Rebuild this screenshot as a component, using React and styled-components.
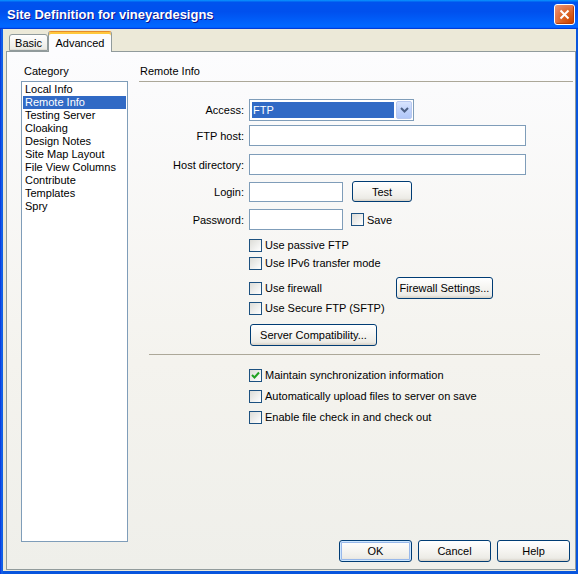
import React from 'react';
import styled, { createGlobalStyle } from 'styled-components';

const GlobalStyle = createGlobalStyle`
	html, body {
		margin: 0;
		padding: 0;
	}
	body {
		font-family: "Liberation Sans", Arial, sans-serif;
		font-size: 11px;
		color: #000;
	}
`;

const Window = styled.div`
	width: 578px;
	height: 574px;
	box-sizing: border-box;
	background: linear-gradient(90deg, #0831d9 0, #166aee 2px, #0855dd 3px);
	display: flex;
	flex-direction: column;
`;

const TitleBar = styled.div`
	height: 29px;
	flex: none;
	display: flex;
	align-items: center;
	justify-content: space-between;
	padding: 0 3px 0 7px;
	background: linear-gradient(180deg, #0997ff, #0053ee 8%, #0050ee 40%, #06f 88%, #06f 93%, #005bff 95%, #003dd7 96%, #003dd7);
`;

const Title = styled.span`
	font-family: "Liberation Sans", Arial, sans-serif;
	font-weight: bold;
	font-size: 13px;
	color: #fff;
	text-shadow: 1px 1px #0f1089;
`;

const CloseButton = styled.button`
	width: 21px;
	height: 21px;
	padding: 0;
	border: 1px solid #fff;
	border-radius: 3px;
	background: radial-gradient(circle at 85% 90%, #cc4600 0, #dc6527 45%, #e5805a 75%, #eb9b7c 100%);
	display: flex;
	align-items: center;
	justify-content: center;
	box-shadow: inset -1px -1px 1px #b33b07;
`;

const Body = styled.div`
	flex: 1;
	display: flex;
	flex-direction: column;
	background: #ece9d8;
	margin: 0 2px 3px 3px;
	padding: 2px 0 1px 3px;
`;

const TabStrip = styled.div`
	height: 20px;
	display: flex;
	align-items: flex-end;
	padding-left: 3px;
`;

const Tab = styled.div`
	box-sizing: border-box;
	width: ${props => props.w}px;
	height: ${props => (props.active ? 21 : 17)}px;
	margin-bottom: ${props => (props.active ? -1 : 0)}px;
	position: relative;
	z-index: ${props => (props.active ? 2 : 0)};
	display: flex;
	align-items: center;
	justify-content: center;
	padding-top: ${props => (props.active ? 1 : 0)}px;
	border: 1px solid #919b9c;
	border-bottom: ${props => (props.active ? 'none' : '1px solid #919b9c')};
	border-top: ${props => (props.active ? '1px solid #e68b2c' : '1px solid #919b9c')};
	border-radius: 3px 3px 0 0;
	background: ${props => (props.active ? '#fcfcfe' : 'linear-gradient(180deg, #fff, #ecebe5 90%, #dad8cf)')};
	box-shadow: ${props => (props.active ? 'inset 0 2px #ffc83c' : 'none')};
	font-size: 11px;
`;

const Panel = styled.div`
	flex: 1;
	display: flex;
	border: 1px solid #919b9c;
	background: linear-gradient(180deg, #fcfcfe, #f4f3ee 60%, #efefea);
	padding: 12px 2px 0 14px;
`;

const Sidebar = styled.div`
	width: 107px;
	flex: none;
	display: flex;
	flex-direction: column;
`;

const SectionLabel = styled.div`
	height: 13px;
	line-height: 13px;
	margin-top: 1px;
	padding-left: ${props => props.indent || 0}px;
	margin-bottom: 3px;
`;

const ListBox = styled.div`
	box-sizing: border-box;
	height: 461px;
	border: 1px solid #7f9db9;
	background: #fff;
	padding: 1px;
`;

const ListItem = styled.div`
	height: 13px;
	line-height: 13px;
	padding-left: 2px;
	background: ${props => (props.selected ? '#316ac5' : 'transparent')};
	color: ${props => (props.selected ? '#fff' : '#000')};
	white-space: nowrap;
`;

const Main = styled.div`
	flex: 1;
	display: flex;
	flex-direction: column;
	margin-left: 11px;
`;

const Heading = styled.div`
	margin-top: 1px;
	height: 13px;
	line-height: 13px;
	padding: 0 0 3px 1px;
	border-bottom: 1px solid #aca899;
`;

const Row = styled.div`
	display: flex;
	align-items: center;
	height: ${props => props.h}px;
	margin-top: ${props => props.mt}px;
	padding-left: ${props => props.pl || 0}px;
`;

const Label = styled.label`
	width: 105px;
	margin-right: 5px;
	text-align: right;
	white-space: nowrap;
`;

const TextInput = styled.div`
	box-sizing: border-box;
	width: ${props => props.w}px;
	height: ${props => props.h || 21}px;
	border: 1px solid #7f9db9;
	background: #fff;
`;

const Select = styled.div`
	box-sizing: border-box;
	width: 165px;
	height: 22px;
	border: 1px solid #7f9db9;
	background: #fff;
	padding: 1px;
	display: flex;
`;

const SelectValue = styled.div`
	flex: 1;
	margin: 1px 0 1px 1px;
	background: #316ac5;
	color: #fff;
	line-height: 16px;
	padding-left: 1px;
`;

const DropButton = styled.div`
	box-sizing: border-box;
	width: 16px;
	margin-left: 2px;
	border: 1px solid #b9c9ef;
	border-radius: 2px;
	background: linear-gradient(180deg, #d8e4fd, #c1d3fb 50%, #b1c7f9);
	display: flex;
	align-items: center;
	justify-content: center;
`;

const Button = styled.button`
	box-sizing: border-box;
	width: ${props => props.w}px;
	height: ${props => props.h || 22}px;
	margin-left: ${props => props.ml || 0}px;
	padding: 0;
	font-family: "Liberation Sans", Arial, sans-serif;
	font-size: 11px;
	color: #000;
	border: 1px solid #003c74;
	border-radius: 3px;
	background: linear-gradient(180deg, #fff, #f3f2ee 60%, #ecebe6 86%, #d6d0c5);
	box-shadow: ${props => (props.primary ? 'inset 0 0 0 1px #cee7ff, inset 0 0 0 2px #98b8ea' : 'none')};
	flex: none;
`;

const CheckItem = styled.label`
	display: flex;
	align-items: center;
	width: ${props => (props.w ? `${props.w}px` : 'auto')};
	margin-left: ${props => props.ml || 0}px;
	white-space: nowrap;
`;

const Box = styled.span`
	box-sizing: border-box;
	width: 13px;
	height: 13px;
	margin-right: 3px;
	border: 1px solid #1c5180;
	background: linear-gradient(135deg, #dcdcd7, #fff);
	display: flex;
	align-items: center;
	justify-content: center;
	flex: none;
`;

const Separator = styled.div`
	margin: 8px 0 0 10px;
	width: 391px;
	height: 1px;
	background: #aca899;
`;

const Footer = styled.div`
	margin-top: auto;
	display: flex;
	justify-content: flex-end;
	gap: 6px;
	padding: 0 3px 7px 0;
`;

const Check = ({ label, checked, w, ml }) => (
	<CheckItem w={w} ml={ml}>
		<Box>
			{checked && (
				<svg width="9" height="9" viewBox="0 0 9 9">
					<path d="M1 4 L3.5 6.5 L8 1.5" fill="none" stroke="#21a121" strokeWidth="2" />
				</svg>
			)}
		</Box>
		{label}
	</CheckItem>
);

const categories = [
	'Local Info',
	'Remote Info',
	'Testing Server',
	'Cloaking',
	'Design Notes',
	'Site Map Layout',
	'File View Columns',
	'Contribute',
	'Templates',
	'Spry',
];

const App = () => (
	<>
		<GlobalStyle />
		<Window>
			<TitleBar>
				<Title>Site Definition for vineyardesigns</Title>
				<CloseButton aria-label="Close">
					<svg width="11" height="11" viewBox="0 0 11 11">
						<path d="M1.5 1.5 L9.5 9.5 M9.5 1.5 L1.5 9.5" stroke="#fff" strokeWidth="2" />
					</svg>
				</CloseButton>
			</TitleBar>
			<Body>
				<TabStrip>
					<Tab w={39}>Basic</Tab>
					<Tab w={64} active>Advanced</Tab>
				</TabStrip>
				<Panel>
					<Sidebar>
						<SectionLabel indent={3}>Category</SectionLabel>
						<ListBox>
							{categories.map(c => (
								<ListItem key={c} selected={c === 'Remote Info'}>
									{c}
								</ListItem>
							))}
						</ListBox>
					</Sidebar>
					<Main>
						<Heading>Remote Info</Heading>
						<Row h={22} mt={17}>
							<Label>Access:</Label>
							<Select>
								<SelectValue>FTP</SelectValue>
								<DropButton>
									<svg width="9" height="6" viewBox="0 0 9 6">
										<path d="M1 1 L4.5 4.5 L8 1" fill="none" stroke="#4d6185" strokeWidth="2" />
									</svg>
								</DropButton>
							</Select>
						</Row>
						<Row h={21} mt={4}>
							<Label>FTP host:</Label>
							<TextInput w={277} />
						</Row>
						<Row h={21} mt={8}>
							<Label>Host directory:</Label>
							<TextInput w={277} />
						</Row>
						<Row h={21} mt={6}>
							<Label>Login:</Label>
							<TextInput w={94} h={20} />
							<Button w={60} h={21} ml={9}>Test</Button>
						</Row>
						<Row h={21} mt={7}>
							<Label>Password:</Label>
							<TextInput w={94} />
							<Check label="Save" ml={8} />
						</Row>
						<Row h={16} mt={7} pl={110}>
							<Check label="Use passive FTP" />
						</Row>
						<Row h={16} mt={2} pl={110}>
							<Check label="Use IPv6 transfer mode" />
						</Row>
						<Row h={22} mt={6} pl={110}>
							<Check label="Use firewall" w={147} />
							<Button w={97}>Firewall Settings...</Button>
						</Row>
						<Row h={16} mt={1} pl={110}>
							<Check label="Use Secure FTP (SFTP)" />
						</Row>
						<Row h={22} mt={8} pl={111}>
							<Button w={127}>Server Compatibility...</Button>
						</Row>
						<Separator />
						<Row h={16} mt={12} pl={110}>
							<Check label="Maintain synchronization information" checked />
						</Row>
						<Row h={16} mt={5} pl={110}>
							<Check label="Automatically upload files to server on save" />
						</Row>
						<Row h={16} mt={5} pl={110}>
							<Check label="Enable file check in and check out" />
						</Row>
						<Footer>
							<Button w={73} primary>OK</Button>
							<Button w={73}>Cancel</Button>
							<Button w={73}>Help</Button>
						</Footer>
					</Main>
				</Panel>
			</Body>
		</Window>
	</>
);

export default App;
